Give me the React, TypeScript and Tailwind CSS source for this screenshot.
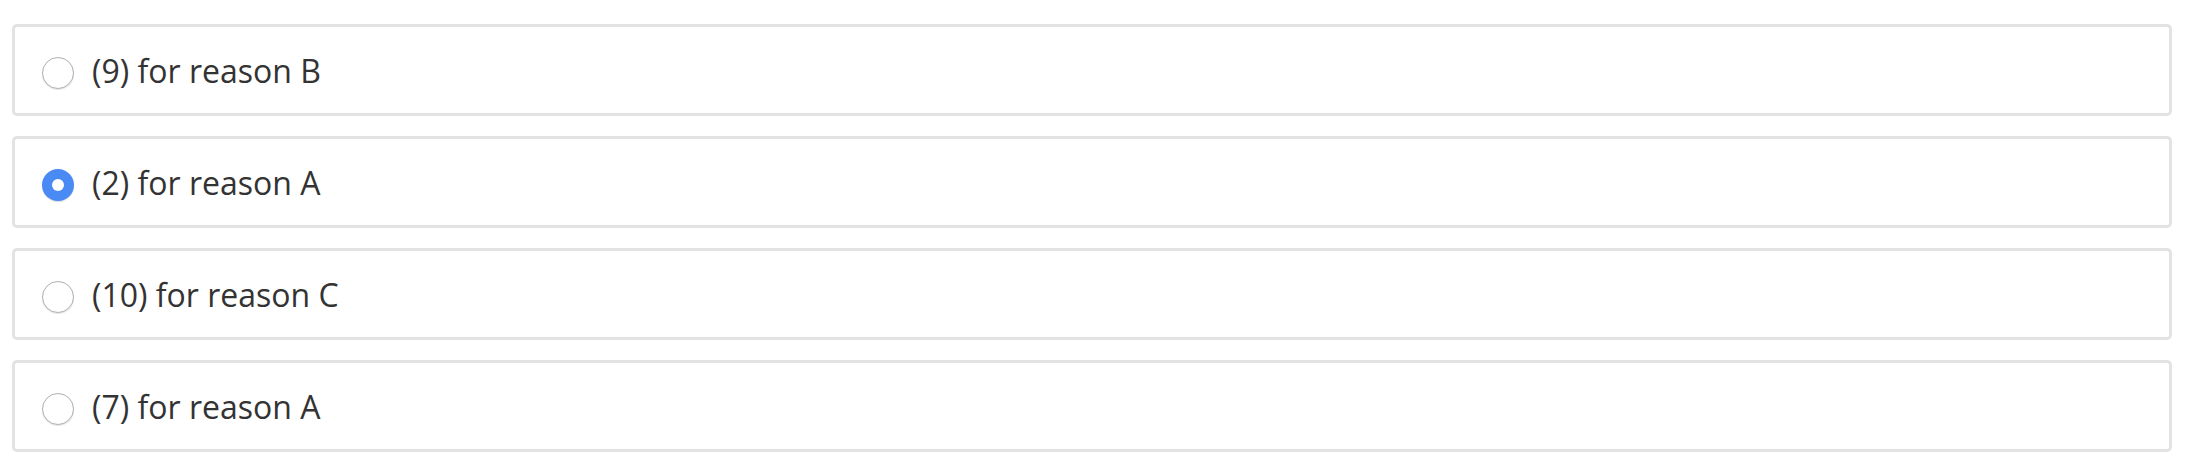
const OPTIONS = [
    { label: "(9) for reason B", checked: false },
    { label: "(2) for reason A", checked: true },
    { label: "(10) for reason C", checked: false },
    { label: "(7) for reason A", checked: false },
];

function Radio({ checked }: { checked: boolean }) {
    if (checked) {
        return (
            <span className="w-8 h-8 rounded-full bg-[#4a8af4] flex items-center justify-center flex-shrink-0 shadow-[0_1px_1px_rgba(0,0,0,0.15)]">
                <span className="w-3 h-3 rounded-full bg-white" />
            </span>
        );
    }
    return (
        <span className="w-8 h-8 rounded-full border border-[#b0b0b0] bg-white flex-shrink-0 shadow-[0_1px_1px_rgba(0,0,0,0.1)]" />
    );
}

export default function App() {
    return (
        <div className="bg-white w-[2186px] h-[462px] pt-[24px] pl-[12px] pr-[14px] flex flex-col gap-[20px] font-['Open_Sans',sans-serif]">
            {OPTIONS.map((o, i) => (
                <label
                    key={i}
                    className="h-[92px] border-[3px] border-[#e3e3e3] rounded-[5px] bg-white flex items-center pl-[27px] pt-[6px] gap-[18px]"
                >
                    <Radio checked={o.checked} />
                    <span className="text-[32px] leading-none text-[#333333] pb-[4px]">{o.label}</span>
                </label>
            ))}
        </div>
    );
}
